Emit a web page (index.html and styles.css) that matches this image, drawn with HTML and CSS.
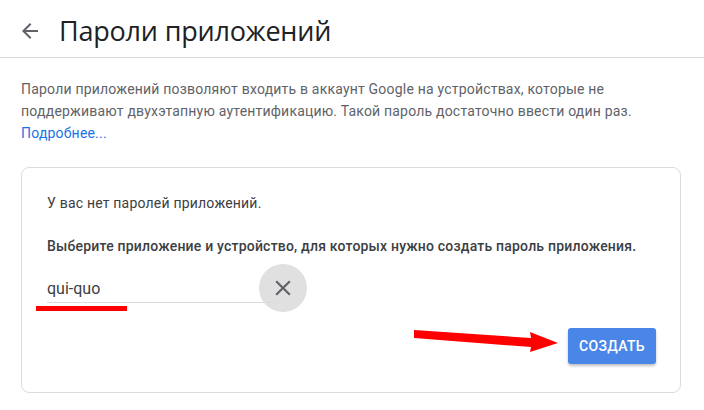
FILE: index.html
```html
<!DOCTYPE html>
<html lang="ru">
<head>
<meta charset="utf-8">
<link rel="stylesheet" href="styles.css">
</head>
<body>
<header class="header">
  <svg class="back" width="24" height="24" viewBox="0 0 24 24"><path d="M20 11H7.83l5.59-5.59L12 4l-8 8 8 8 1.41-1.41L7.83 13H20v-2z" fill="#5f6368"/></svg>
  <h1 class="title">Пароли приложений</h1>
</header>
<main class="content">
  <p class="desc">Пароли приложений позволяют входить в аккаунт Google на устройствах, которые не поддерживают двухэтапную аутентификацию. Такой пароль достаточно ввести один раз. <a class="link" href="#">Подробнее...</a></p>
  <section class="card">
    <p class="empty">У вас нет паролей приложений.</p>
    <p class="prompt">Выберите приложение и устройство, для которых нужно создать пароль приложения.</p>
    <div class="field-row">
      <div class="field">
        <span class="field-text">qui-quo</span>
        <span class="mark"></span>
      </div>
      <div class="clear">
        <svg width="26" height="26" viewBox="0 0 24 24"><path d="M19 6.41L17.59 5 12 10.59 6.41 5 5 6.41 10.59 12 5 17.59 6.41 19 12 13.41 17.59 19 19 17.59 13.41 12z" fill="#5f6368"/></svg>
      </div>
    </div>
    <div class="actions">
      <svg class="arrow" width="150" height="26" viewBox="0 0 150 26"><path d="M2 2 L119 10 L118 4 L146 15 L118 24 L119 19 L2 10 Z" fill="#ff0000"/></svg>
      <button class="btn">СОЗДАТЬ</button>
    </div>
  </section>
</main>
</body>
</html>
```
FILE: styles.css
```css
* { box-sizing: border-box; }
html, body { margin: 0; padding: 0; background: #fff; }
body { font-family: Roboto, "Noto Sans", sans-serif; color: #3c4043; width: 704px; height: 410px; overflow: hidden; }
.header { display: flex; align-items: center; height: 58px; border-bottom: 1px solid #dadce0; padding-left: 18px; }
.back { display: block; margin-top: 4px; }
.title { margin: 0 0 0 17px; font-family: "Open Sans", Roboto, sans-serif; font-weight: 400; font-size: 27px; color: #202124; letter-spacing: -0.2px; padding-top: 3px; }
.content { padding: 20px 23px 0 21px; }
.desc { margin: 0; font-size: 14px; line-height: 22px; color: #5f6368; max-width: 620px; letter-spacing: 0.2px; }
.link { color: #1a73e8; text-decoration: none; }
.card { margin-top: 23px; border: 1px solid #dadce0; border-radius: 8px; height: 226px; padding: 24px 25px 0 25px; }
.empty { margin: 0; font-size: 14px; line-height: 22px; color: #3c4043; letter-spacing: 0.2px; }
.prompt { margin: 21px 0 0 0; font-size: 14px; line-height: 22px; font-weight: 500; color: #3c4043; letter-spacing: 0.2px; }
.field-row { display: flex; align-items: center; height: 48px; margin-top: 7px; }
.field { position: relative; width: 236px; border-bottom: 1px solid #dadce0; height: 29px; padding-top: 5px; font-size: 16px; color: #3c4043; }
.mark { position: absolute; left: -11px; top: 32px; width: 91px; height: 5px; background: #ff0000; }
.clear { width: 48px; height: 48px; border-radius: 50%; background: #e0e0e0; display: flex; align-items: center; justify-content: center; margin-left: -24px; }
.actions { position: relative; display: flex; justify-content: flex-end; margin-top: 16px; }
.arrow { position: absolute; right: 93px; top: 0; }
.btn { width: 88px; height: 36px; border: none; border-radius: 3px; background: #4a86e8; color: #fff; font-family: Roboto, sans-serif; font-weight: 500; font-size: 14px; letter-spacing: 0.3px; box-shadow: 0 2px 3px rgba(0,0,0,0.25); margin-right: -1px; }
```
